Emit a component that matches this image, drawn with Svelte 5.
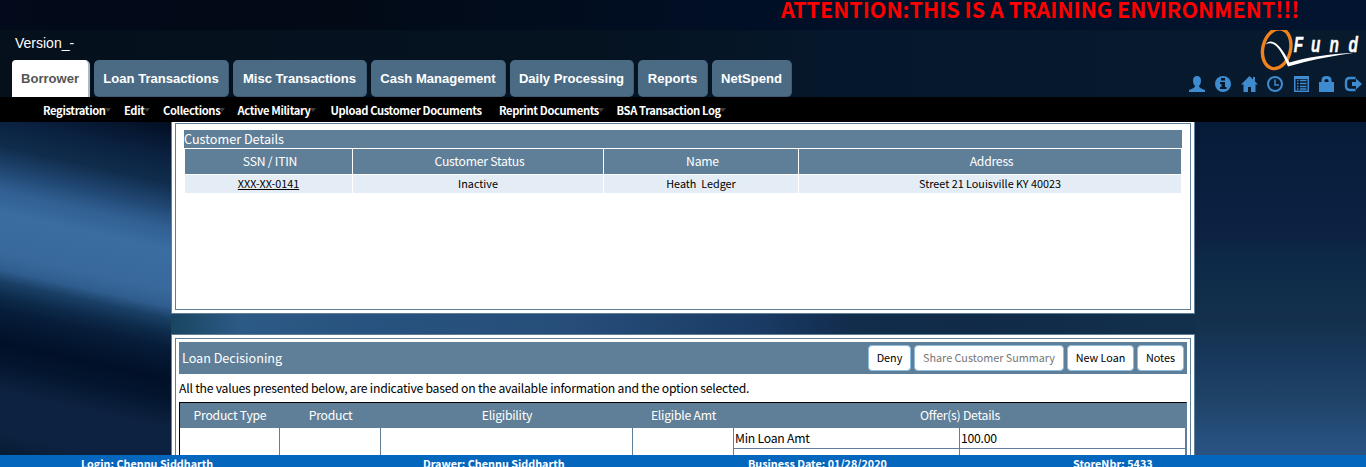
<script>
  const tabs = [['Borrower',78],['Loan Transactions',135],['Misc Transactions',134],['Cash Management',135],['Daily Processing',124],['Reports',70],['NetSpend',80]];
  const menu = [['Registration',81,1],['Edit',39,1],['Collections',74.5,1],['Active Military',93,1],['Upload Customer Documents',168.5,0],['Reprint Documents',117.5,1],['BSA Transaction Log',108,1]];
</script>

<div class="page">
  <div class="notice">ATTENTION:THIS IS A TRAINING ENVIRONMENT!!!</div>
  <header>
    <div class="left">
      <div class="version">Version_-</div>
      <div class="tabs">
        {#each tabs as [t, w], i}<div class="tab" class:active={i === 0} style="width:{w}px">{t}</div>{/each}
      </div>
    </div>
    <div class="right">
      <svg class="logo" width="106" height="42" viewBox="1260 30 106 42">
        <ellipse cx="1276.700" cy="48.700" rx="13.800" ry="20.200" transform="rotate(14 1276.7 48.7)" fill="none" stroke="#f0821e" stroke-width="3.400"/>
        <path d="M1265.500 44.500C1272 36 1282 47 1289.500 62.500Q1314 55 1356 52.500Q1316 58 1288 66.500C1282 52 1275 39 1265.500 44.500Z" fill="#fff"/>
        <g transform="translate(1294.500 52) scale(.7 1)" font-family="Liberation Sans" font-weight="bold" font-style="italic" font-size="22" fill="#fff" stroke="#fff" stroke-width=".4"><text x="-1">F</text><text x="23.500">u</text><text x="50">n</text><text x="77">d</text></g>
      </svg>
      <svg class="icons" width="178" height="18" viewBox="0 0 178 18" fill="#3f8bd0">
        <path d="M9 1q4 0 4 5 0 3-2 5 0 2 6 4v2H1v-2q6-2 6-4-2-2-2-5 0-5 4-5Z"/>
        <circle cx="35" cy="9" r="8"/><path d="M33 3h4v2.500h-4zM32 7h5v5h1.500v2H32v-2h1.500V9H32z" fill="#061729"/>
        <path d="M61.500 1 70 9.500h-2.500V17H63v-5h-3v5h-4.500V9.500H53L61.500 1ZM65 2h2v4h-2z"/>
        <circle cx="87" cy="9" r="7" fill="none" stroke="#3f8bd0" stroke-width="2"/><path d="M87 4.500V10h4" fill="none" stroke="#3f8bd0" stroke-width="1.500"/>
        <path d="M106 1h15v16h-15zM107.500 4v11.500h12V4z" fill-rule="evenodd"/><path d="M109 5.500h1.500M109 8.500h1.500M109 11.500h1.500M109 14h1.500M112 5.500h6.500M112 8.500h6.500M112 11.500h6.500M112 14h6.500" stroke="#3f8bd0" stroke-width="1.500"/>
        <path d="M131 7h2.500V5q0-4 5-4t5 4v2h2.500v10h-15zM136.500 7h4V5.500q0-1.500-2-1.500t-2 1.500z" fill-rule="evenodd"/>
        <path d="M167.500 3H162q-4 0-4 4v4q0 4 4 4h5.500" fill="none" stroke="#3f8bd0" stroke-width="2.400"/><path d="M164 7h4V3.500l6 5.500-6 5.500V11h-4z"/>
      </svg>
    </div>
  </header>
  <nav>{#each menu as [t, w, a]}<div class="item" style="width:{w}px">{t}{#if a}<i></i>{/if}</div>{/each}</nav>
  <main>
    <div class="beam"></div>
    <div class="center">
      <section class="panel p1"><div class="inner">
        <h2 class="title">Customer Details</h2>
        <div class="grid head"><div>SSN / ITIN</div><div>Customer Status</div><div>Name</div><div>Address</div></div>
        <div class="grid row"><div><u>XXX-XX-0141</u></div><div>Inactive</div><div>Heath&nbsp; Ledger</div><div>Street 21 Louisville KY 40023</div></div>
      </div></section>
      <section class="panel p2"><div class="inner">
        <div class="bar"><span>Loan Decisioning</span><div class="buttons"><button style="width:43px">Deny</button><button disabled style="width:150px">Share Customer Summary</button><button style="width:67px">New Loan</button><button style="width:47px">Notes</button></div></div>
        <p class="note">All the values presented below, are indicative based on the available information and the option selected.</p>
        <div class="offers">
          <div class="ohead"><div>Product Type</div><div>Product</div><div>Eligibility</div><div>Eligible Amt</div><div>Offer(s) Details</div></div>
          <div class="obody"><div></div><div></div><div></div><div></div><div class="pair"><span>Min Loan Amt</span><span>100.00</span><span></span><span></span></div></div>
        </div>
      </div></section>
    </div>
    <div class="glow"></div>
  </main>
  <footer><span>Login: Chennu Siddharth</span><span>Drawer: Chennu Siddharth</span><span>Business Date: 01/28/2020</span><span>StoreNbr: 5433</span></footer>
</div>

<style>
  .page { width: 1366px; height: 467px; overflow: hidden; font: 12.2px/18px "Noto Sans CJK SC", sans-serif; letter-spacing: -.23px; color: #000; display: flex; flex-direction: column; }
  .page * { box-sizing: border-box; }
  .notice { height: 30px; flex: none; background: linear-gradient(90deg, #020a1b, #020a16 25%, #010f26 55%, #02142f); color: #f00; font-weight: bold; font-size: 21.5px; letter-spacing: 0; line-height: 17px; padding-left: 781px; white-space: nowrap; }
  header { height: 67px; flex: none; display: flex; justify-content: space-between; letter-spacing: 0; background: linear-gradient(90deg, #06101d, #05121f 40%, #05172a 60%, #081a2d); }
  .version { font: 14px/16px "Liberation Sans", sans-serif; color: #fff; padding: 5px 0 0 15px; height: 30px; }
  .tabs { display: flex; gap: 4px; padding-left: 12px; }
  .tab { height: 37px; background: #4b6b85; border-radius: 5px; color: #fff; font: bold 13.05px/37px "Liberation Sans", sans-serif; text-align: center; white-space: nowrap; border-right: 1px solid #3e5b73; border-bottom: 1px solid #3e5b73; }
  .active { background: #fff; color: #555; border-right: 2px solid #a9bac7; border-bottom: 0; border-radius: 4px 5px 0 0; }
  .right { display: flex; flex-direction: column; align-items: flex-end; }
  .icons { margin-top: 3px; }
  nav { height: 25px; flex: none; background: #000; display: flex; padding-left: 43px; }
  .item { color: #fff; font-weight: bold; font-size: 11.2px; letter-spacing: -.38px; line-height: 26px; white-space: nowrap; display: flex; flex: none; }
  .item i { margin: 11px 0 0 -1px; width: 0; height: 0; border: 3px solid transparent; border-top: 4px solid #3c3c3c; border-bottom: 0; }
  main { height: 333px; flex: none; display: flex; }
  .beam { width: 171px; background: linear-gradient(192.5deg, #020e22 0, #0a2140 34px, #102c4c 60px, #1f4570 82px, #315f92 103px, #3a6da0 125px, #39699c 165px, #2f5d8e 181px, #1a4066 192px, #0d2a4a 207px, #061c38 222px, #011028 252px, #03152e 271px, #0d2240 299px, #0c2240 340px, #061c33 362px); }
  .center { width: 1024px; overflow: hidden; background: linear-gradient(90deg, #1a4560, #2c5a86 70px, #28527f 200px, #264e79 400px, #1a3c66 580px, #122c4c 680px, #102a48 800px, #12304c); }
  .glow { width: 171px; background: linear-gradient(180deg, #061b38, #0a2040 80px, #0e2344 118px, #0c2a48 140px, #14304c 200px, #17375a 232px, #1f4468 280px, #275080 318px, #2b5380); }
  .panel { border: 1px solid #5f7f98; padding: 3px; background: #fff; }
  .inner { border: 1px solid #5f7f98; height: 100%; }
  .p1 { height: 195px; margin-top: -3px; }
  .p1 .inner { padding: 6px 8px; }
  .title { margin: 0; height: 18px; background: #5f7f98; color: #fff; font-weight: 400; font-size: 12.65px; letter-spacing: 0; }
  .grid { display: grid; grid-template-columns: 167px 250px 194px 382px; gap: 1px; padding: 1px 1px 0; text-align: center; }
  .head div { background: #5f7f98; color: #fff; height: 25px; line-height: 25px; padding-left: 3px; }
  .row div { background: #e4edf5; height: 18px; line-height: 16px; font-size: 10.8px; letter-spacing: 0; }
  .p2 { margin-top: 20px; height: 200px; }
  .p2 .inner { padding: 3px; }
  .bar { height: 32px; background: #5f7f98; color: #fff; font-size: 12.6px; letter-spacing: 0; display: flex; justify-content: space-between; align-items: center; padding: 0 3px; }
  .buttons { display: flex; gap: 3px; }
  button { height: 26px; border: 1px solid #8ebde2; border-radius: 4px; background: #fff; font: 10.8px/22px "Noto Sans CJK SC", sans-serif; padding: 0 0 2px; color: #000; white-space: nowrap; }
  button:disabled { color: #777; }
  .note { margin: 0; height: 28px; line-height: 29px; white-space: nowrap; }
  .offers { border: 1px solid #000; border-right: 1px solid #5f7f98; border-bottom: 0; width: 1008px; }
  .ohead { display: grid; grid-template-columns: 100px 101px 252px 101px 1fr; text-align: center; color: #fff; background: #5f7f98; height: 25px; line-height: 25px; }
  .obody { display: grid; grid-template-columns: 100px 101px 252px 101px 1fr; height: 100px; }
  .obody > div { border-right: 1px solid #5f7f98; }
  .pair { display: grid; grid-template-columns: 226px 1fr; grid-template-rows: 21px 1fr; line-height: 21px; }
  .pair span { border-bottom: 1px solid #5f7f98; padding-left: 1px; }
  .pair span:nth-child(odd) { border-right: 1px solid #5f7f98; }
  footer { height: 12px; flex: none; background: #0566be; color: #fff; font-weight: bold; font-size: 10.8px; letter-spacing: 0; line-height: 16px; white-space: nowrap; display: grid; grid-template-columns: 342px 325px 325px 1fr; padding-left: 81px; }
</style>
